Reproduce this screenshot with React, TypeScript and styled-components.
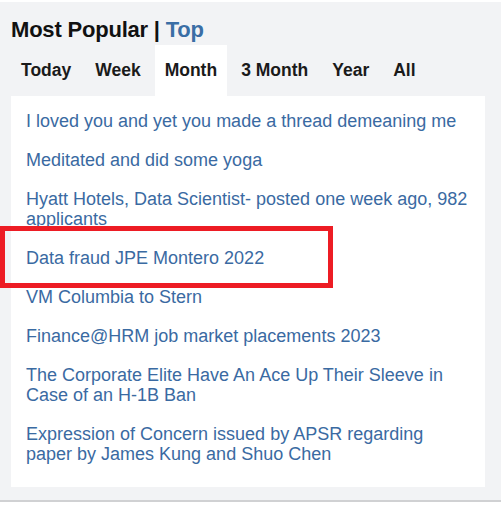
import React from "react";
import styled, { createGlobalStyle } from "styled-components";

const Global = createGlobalStyle`
  html, body { margin: 0; padding: 0; background: #ffffff; }
  body { font-family: "Liberation Sans", Arial, sans-serif; }
`;

const Page = styled.div`
  position: relative;
  width: 501px;
  height: 507px;
  padding-top: 2px;
  box-sizing: border-box;
`;

const Panel = styled.section`
  background: #f2f3f5;
  border-bottom: 2px solid #d0d1d3;
  height: 500px;
  box-sizing: border-box;
  padding: 0 16px 0 11px;
  display: flex;
  flex-direction: column;
`;

const Title = styled.h2`
  margin: 0;
  padding-top: 15px;
  font-size: 22px;
  line-height: 26px;
  font-weight: 700;
  color: #111;
  letter-spacing: -0.2px;
`;

const TitleLink = styled.span`
  color: #3a6ea5;
`;

const Tabs = styled.nav`
  display: flex;
  gap: 4px;
  margin-top: 2px;
`;

const Tab = styled.div<{ $active?: boolean }>`
  height: 51px;
  display: flex;
  align-items: center;
  padding: 0 10px;
  font-size: 17.5px;
  font-weight: 700;
  color: #1a1a1a;
  background: ${(p) => (p.$active ? "#ffffff" : "transparent")};
`;

const Card = styled.div`
  background: #ffffff;
  padding: 15px 15px 2px 15px;
  height: 391px;
  box-sizing: border-box;
`;

const List = styled.ul`
  list-style: none;
  margin: 0;
  padding: 0;
`;

const Item = styled.li`
  font-size: 18px;
  line-height: 20px;
  color: #3a6aa2;
  margin-bottom: 19px;
`;

const Highlight = styled.div`
  position: absolute;
  left: 0;
  top: 226px;
  width: 333px;
  height: 62px;
  box-sizing: border-box;
  border: 5px solid #ed1c24;
  pointer-events: none;
`;

const items = [
  "I loved you and yet you made a thread demeaning me",
  "Meditated and did some yoga",
  "Hyatt Hotels, Data Scientist- posted one week ago, 982 applicants",
  "Data fraud JPE Montero 2022",
  "VM Columbia to Stern",
  "Finance@HRM job market placements 2023",
  "The Corporate Elite Have An Ace Up Their Sleeve in Case of an H-1B Ban",
  "Expression of Concern issued by APSR regarding paper by James Kung and Shuo Chen",
];

const tabs = ["Today", "Week", "Month", "3 Month", "Year", "All"];

export default function App() {
  return (
    <Page>
      <Global />
      <Panel>
        <Title>
          Most Popular | <TitleLink>Top</TitleLink>
        </Title>
        <Tabs>
          {tabs.map((t) => (
            <Tab key={t} $active={t === "Month"}>
              {t}
            </Tab>
          ))}
        </Tabs>
        <Card>
          <List>
            {items.map((it) => (
              <Item key={it}>{it}</Item>
            ))}
          </List>
        </Card>
      </Panel>
      <Highlight />
    </Page>
  );
}
